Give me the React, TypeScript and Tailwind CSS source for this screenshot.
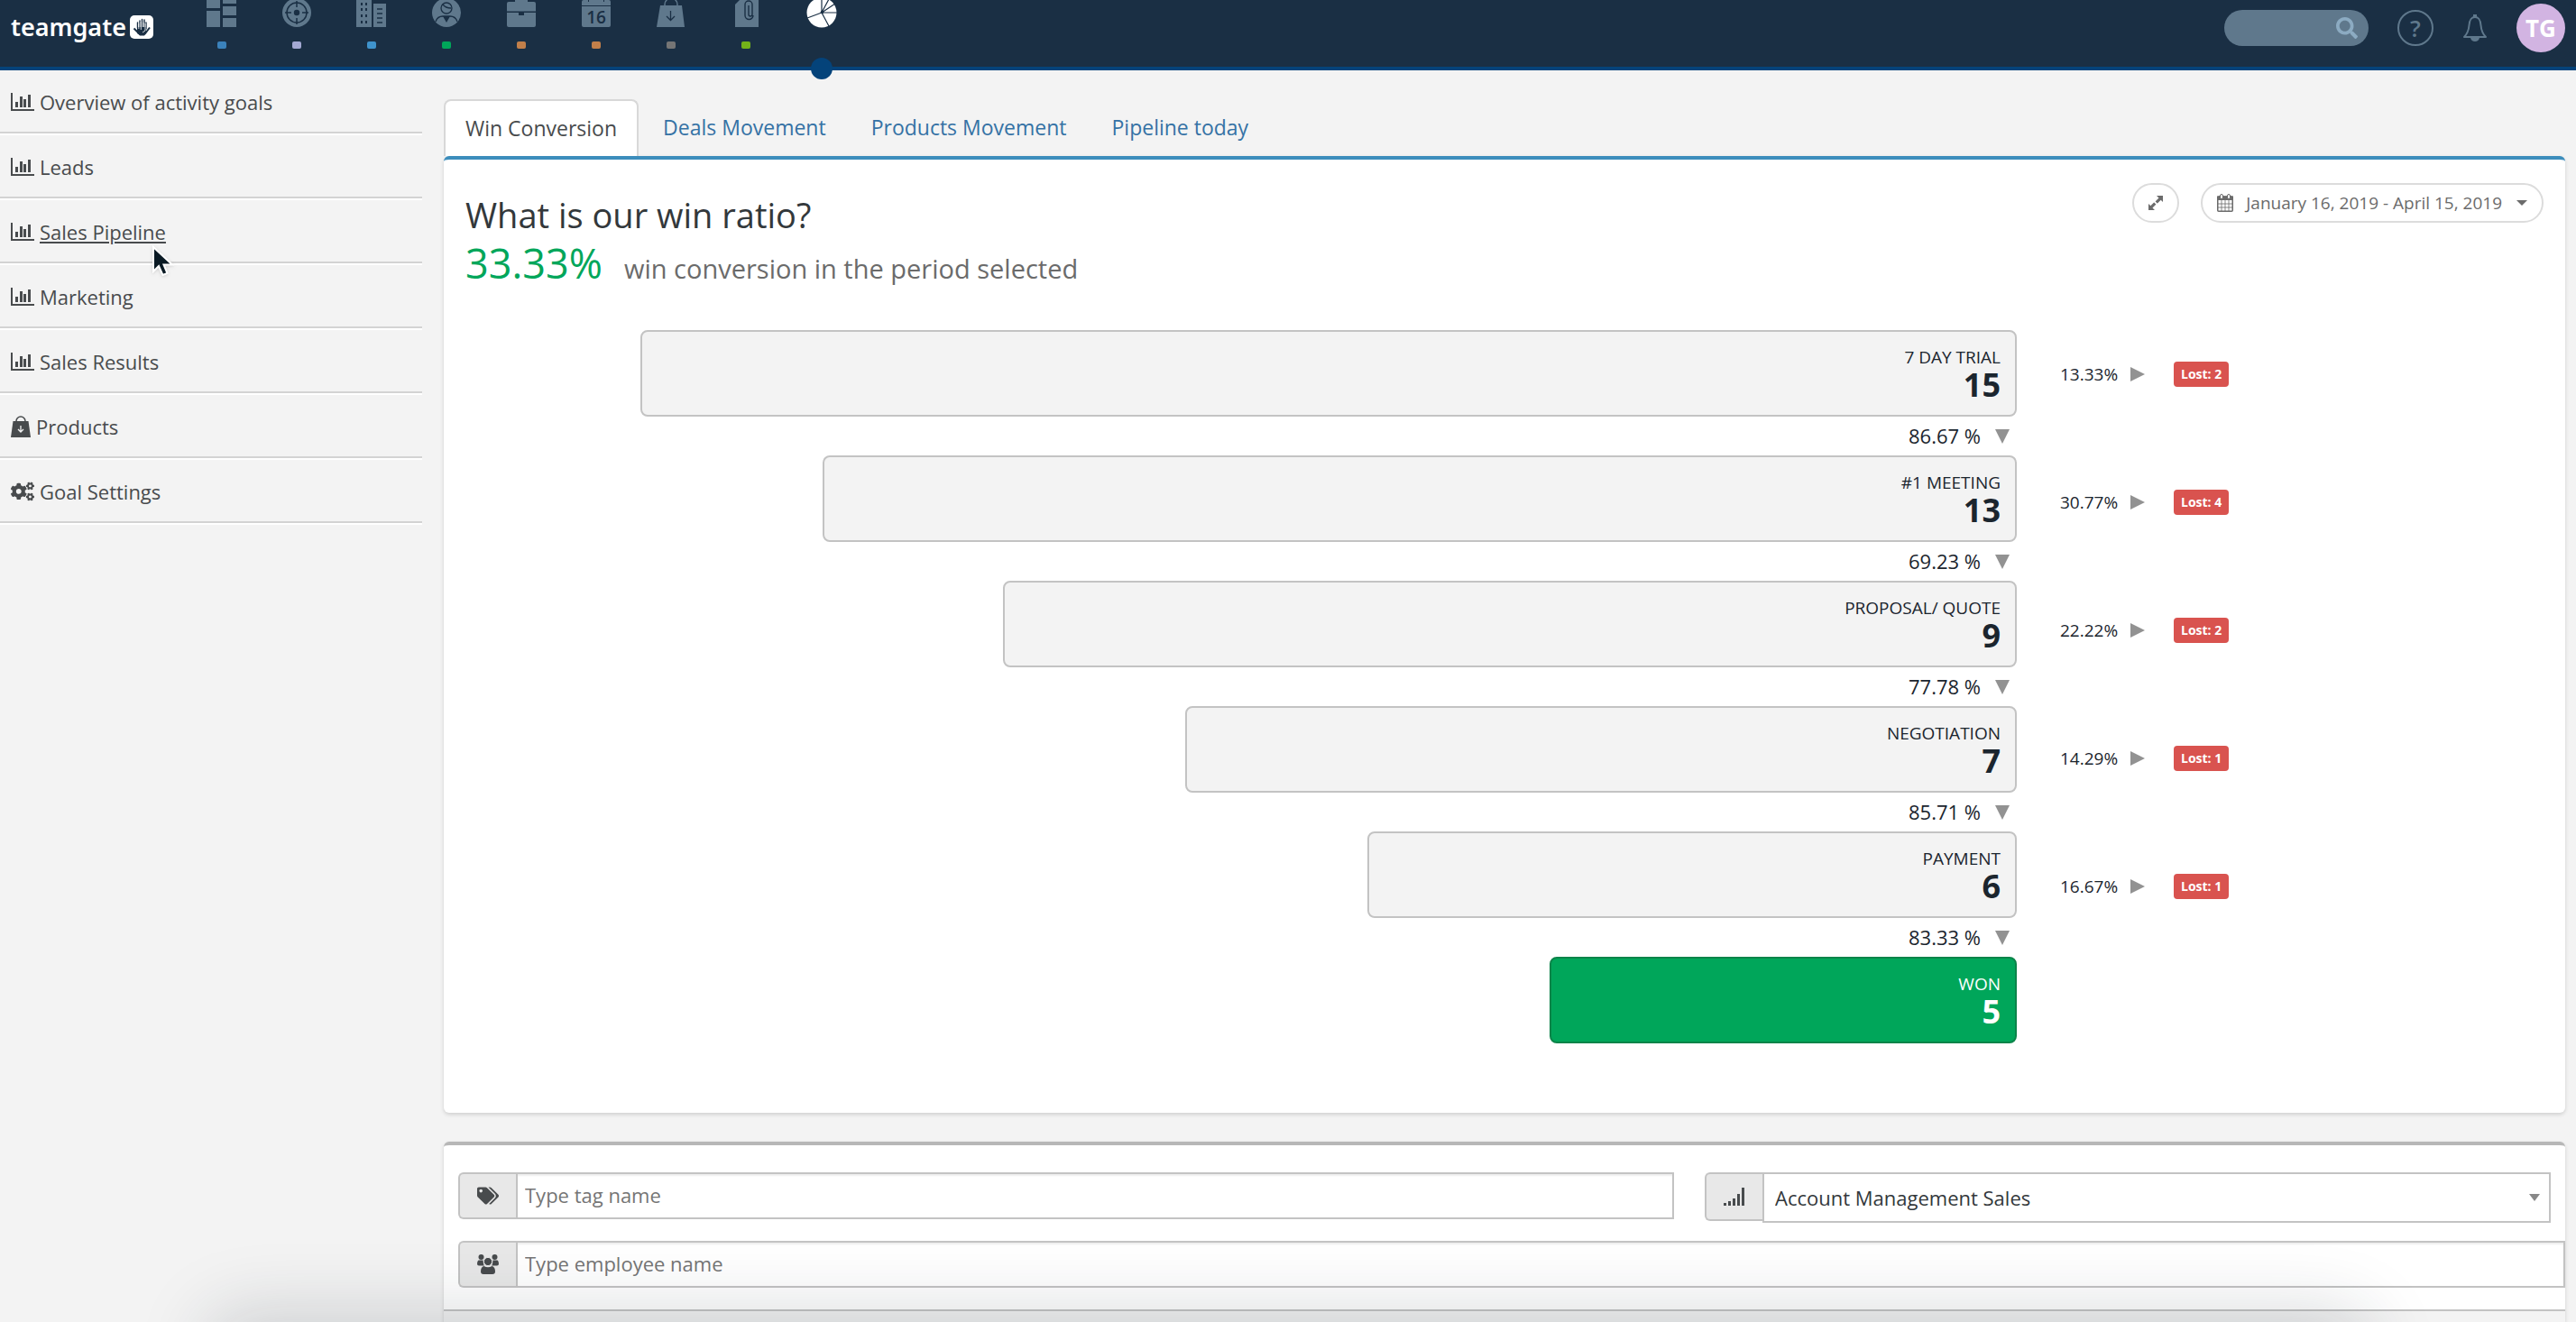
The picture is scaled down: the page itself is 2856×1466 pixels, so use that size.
import React from "react";
import { FaCogs, FaSearch, FaTags } from "react-icons/fa";

const BarChartIcon = () => (
  <svg className="w-[26px] h-5 shrink-0" viewBox="0 0 26 20" fill="currentColor">
    <path d="M0 0h2v18h24v2H0z" />
    <path d="M5 10h3v6H5zM10 4h3v12h-3zM14 7h3v9h-3zM19 2h3v14h-3z" />
  </svg>
);

const BagIcon = () => (
  <svg className="w-[22px] h-6 shrink-0" viewBox="0 0 22 24" fill="none">
    <path d="M6 8V6a5 5 0 0 1 10 0v2" stroke="currentColor" strokeWidth="1.5" />
    <path d="M2.5 6h17L22 24H0z" fill="currentColor" />
    <path d="M11 11v7M8 15l3 3 3-3" stroke="#f3f3f3" strokeWidth="1.3" />
  </svg>
);

const CalendarIcon = () => (
  <svg className="w-[18px] h-5 shrink-0" viewBox="0 0 18 20" fill="none">
    <rect x="0.75" y="3" width="16.5" height="16.2" rx="1" stroke="currentColor" strokeWidth="1.5" />
    <path d="M0 2.5h18V7H0z" fill="currentColor" />
    <path d="M5 7v12M9 7v12M13 7v12M1 11h16M1 15h16" stroke="currentColor" strokeWidth="0.8" />
    <rect x="3.5" y="0.5" width="3" height="5" rx="1.5" fill="#fff" stroke="currentColor" />
    <rect x="11.5" y="0.5" width="3" height="5" rx="1.5" fill="#fff" stroke="currentColor" />
  </svg>
);

const UsersIcon = () => (
  <svg className="w-6 h-[22px]" viewBox="0 0 24 22" fill="currentColor">
    <circle cx="4.5" cy="3" r="3" />
    <circle cx="19.5" cy="3" r="3" />
    <path d="M1.5 6.5h5C7 8 6.5 11 8 12.5H2Q0 12.5 0 10.5 0 7.5 1.5 6.5zM22.5 6.5h-5C17 8 17.5 11 16 12.5h6q2 0 2-2 0-3-1.5-4z" />
    <circle cx="12" cy="8" r="4.6" stroke="#e8e8e8" />
    <path d="M7.5 13q4.5 2.5 9 0 3.5 1 3.5 6 0 3-3 3H7q-3 0-3-3 0-5 3.5-6z" />
  </svg>
);

const SignalIcon = () => (
  <svg className="w-6 h-5" viewBox="0 0 24 20" fill="currentColor">
    <path d="M0 17h3v3H0zM5 15h3v5H5zM10 12h3v8h-3zM15 7h3v13h-3zM20 0h3v20h-3z" />
  </svg>
);

const HandLogo = () => (
  <svg className="w-[26px] h-[26px]" viewBox="0 0 26 26" fill="none">
    <rect width="26" height="26" rx="5" fill="#fff" />
    <path d="M8.5 14V8M11 14V6M13.5 13V4.500M16 13V5M18 15V8" stroke="#1a2f44" strokeWidth="1.4" strokeLinecap="round" />
    <path d="M8 13h10v7l-3.500 2h-3L8 20z" fill="#1a2f44" />
    <path d="M4.500 14.500l5 5 2 2h4l2-2 4.500-6" stroke="#1a2f44" strokeWidth="2" strokeLinejoin="round" />
    <path d="M9.800 9v6M12.300 7v9M14.800 8v5M17 9v8l-3 2" stroke="#fff" strokeWidth="0.8" />
  </svg>
);

const D = "#1a2f44";

const navItems = [
  {
    label: "Dashboard",
    dot: "bg-[#3b82bb]",
    icon: <path d="M0 0h15v9H0zM0 12h15v18H0zM18 0h15v4H18zM18 7h15v10H18zM18 20h15v10H18z" />,
  },
  {
    label: "Leads",
    dot: "bg-[#a3a9d3]",
    icon: (
      <>
        <circle cx="17" cy="14" r="16" />
        <circle cx="17" cy="14" r="11" fill="none" stroke={D} strokeWidth="1.5" />
        <path d="M17 1v7M17 20v7M4 14h7M23 14h7" stroke={D} strokeWidth="1.5" />
        <circle cx="17" cy="14" r="3.2" fill={D} />
      </>
    ),
  },
  {
    label: "Companies",
    dot: "bg-[#3f93cc]",
    icon: (
      <>
        <path d="M0 0h17v30H0zM19 4h14v26H19z" />
        <path d="M5 3h2v3H5zM10 3h2v3h-2zM5 9h2v3H5zM10 9h2v3h-2zM5 16h2v3H5zM10 16h2v3h-2zM5 23h2v3H5zM10 23h2v3h-2z" fill={D} />
        <path d="M23 10h6M23 15h6M23 20h6M23 25h6" stroke={D} strokeWidth="1.3" />
      </>
    ),
  },
  {
    label: "People",
    dot: "bg-[#00a65a]",
    icon: (
      <>
        <circle cx="17" cy="14" r="16" />
        <circle cx="17" cy="9" r="6" fill="none" stroke={D} strokeWidth="1.3" />
        <path d="M13 5q3 4 9 4M5 24q2-6 8-6h8q6 0 8 6" fill="none" stroke={D} strokeWidth="1.3" />
        <path d="M13 18h8l-4 7z" fill={D} />
      </>
    ),
  },
  {
    label: "Deals",
    dot: "bg-[#c17f4a]",
    icon: (
      <>
        <path d="M11 3V1h12v2" fill="none" stroke="currentColor" strokeWidth="2" />
        <rect x="1" y="2" width="32" height="28" rx="2" />
        <path d="M1 12.5h32v1.500H1zM14 13h6v4h-6z" fill={D} />
      </>
    ),
  },
  {
    label: "Calendar",
    dot: "bg-[#c17f4a]",
    icon: (
      <>
        <rect x="1" y="0" width="32" height="30" rx="2" />
        <path d="M1 6h32v1H1zM8 0h1v2H8zM25 0h1v2h-1z" fill={D} />
        <text x="17" y="26" textAnchor="middle" fontSize="19" fontFamily="Open Sans" fontWeight="600" fill={D}>
          16
        </text>
      </>
    ),
  },
  {
    label: "Products",
    dot: "bg-[#757575]",
    icon: (
      <>
        <path d="M10 8V5a7 7 0 0 1 14 0v3" fill="none" stroke="currentColor" strokeWidth="1.5" />
        <path d="M5 6h24l3 24H1z" />
        <path d="M16.5 12v10M12 18l4.500 4.500L21 18" fill="none" stroke={D} strokeWidth="1.3" />
      </>
    ),
  },
  {
    label: "Files",
    dot: "bg-[#73b219]",
    icon: (
      <>
        <path d="M10 0h21v30H5V5z" />
        <path d="M20 6v10a2 2 0 0 0 4 0V5a4 4 0 0 0-8 0v12a4.500 4.500 0 0 0 9 0" fill="none" stroke={D} strokeWidth="1.4" />
      </>
    ),
  },
];

const sideLinks = [
  { label: "Overview of activity goals", icon: <BarChartIcon /> },
  { label: "Leads", icon: <BarChartIcon /> },
  { label: "Sales Pipeline", icon: <BarChartIcon />, hovered: true },
  { label: "Marketing", icon: <BarChartIcon /> },
  { label: "Sales Results", icon: <BarChartIcon /> },
  { label: "Products", icon: <BagIcon /> },
  { label: "Goal Settings", icon: <FaCogs className="w-[26px] h-6 shrink-0" /> },
];

const tabs = ["Win Conversion", "Deals Movement", "Products Movement", "Pipeline today"];

const stages = [
  { name: "7 DAY TRIAL", count: 15, next: "86.67 %", width: 1526 },
  { name: "#1 MEETING", count: 13, next: "69.23 %", width: 1324 },
  { name: "PROPOSAL/ QUOTE", count: 9, next: "77.78 %", width: 1124 },
  { name: "NEGOTIATION", count: 7, next: "85.71 %", width: 922 },
  { name: "PAYMENT", count: 6, next: "83.33 %", width: 720 },
  { name: "WON", count: 5, next: null, width: 518 },
];

const losses = [
  { pct: "13.33%", lost: 2 },
  { pct: "30.77%", lost: 4 },
  { pct: "22.22%", lost: 2 },
  { pct: "14.29%", lost: 1 },
  { pct: "16.67%", lost: 1 },
];

function Header() {
  return (
    <header className="flex h-[78px] items-start border-b-4 border-[#04437a] bg-[#1a2f44]">
      <a href="#" className="flex w-[204px] items-center gap-1 pl-3 pt-[10px] text-white">
        <span className="font-['Noto_Sans',sans-serif] text-[27px] leading-10 font-semibold">teamgate</span>
        <HandLogo />
      </a>

      <nav className="flex">
        {navItems.map((item) => (
          <a key={item.label} href="#" aria-label={item.label} className="flex w-[83px] flex-col items-center text-[#5f788c]">
            <svg className="w-[34px] h-[30px] overflow-visible" viewBox="0 0 34 30" fill="currentColor">
              {item.icon}
            </svg>
            <span className={`mt-4 h-2 w-[10px] rounded-xs ${item.dot}`} />
          </a>
        ))}
        {/* Active section, marked by the dot sitting on the border */}
        <a href="#" aria-label="Insights" className="relative flex h-[74px] w-[86px] flex-col items-center text-white">
          <svg className="w-[34px] h-[30px] overflow-visible" viewBox="0 0 34 30" fill="currentColor">
            <circle cx="17" cy="14" r="16.5" />
            <path d="M17 14V-3M17 14L25-1M17 14L32 4M17 14h17M17 14L25 29M17 14L1 20" stroke={D} strokeWidth="1.2" />
            <circle cx="17.5" cy="13.5" r="1.8" fill={D} />
          </svg>
          <span className="absolute -bottom-[14px] h-6 w-6 rounded-full bg-[#04437a]" />
        </a>
      </nav>

      <div className="ml-auto flex items-center pr-3 pt-1">
        <label className="flex h-10 w-[160px] items-center rounded-full bg-[#5f788c] pr-3">
          <input aria-label="Search" className="min-w-0 flex-1 bg-transparent pl-4 text-xl text-white outline-none" />
          <FaSearch className="h-6 w-6 text-[#8cabc2]" />
        </label>
        <button aria-label="Help" className="ml-8 flex h-10 w-10 items-center justify-center rounded-full border-2 border-[#5f788c] text-[26px] leading-none font-semibold text-[#5f788c]">
          ?
        </button>
        <button aria-label="Notifications" className="ml-8 text-[#5f788c]">
          <svg className="w-[28px] h-[30px]" viewBox="0 0 28 30" fill="none">
            <path
              d="M14 3C9 3 8 7 7.500 12 7 18 6 21 2 25h24c-4-4-5-7-5.500-13C20 7 19 3 14 3z"
              stroke="currentColor"
              strokeWidth="2"
              strokeLinejoin="round"
            />
            <path d="M12 0h4v4h-4zM9 26h10q-1 4-5 4t-5-4z" fill="currentColor" />
          </svg>
        </button>
        <button className="ml-8 h-[54px] w-[54px] rounded-full bg-[#d2b4e2] text-[26px] font-bold text-white">TG</button>
      </div>
    </header>
  );
}

function Sidebar() {
  return (
    <aside className="-mt-0.5 w-[468px] shrink-0">
      {sideLinks.map((link) => (
        <div key={link.label} className="flex h-[72px] items-center border-b-2 border-[#d3d3d3] pl-3 pt-1 shadow-[0_2px_0_#fff]">
          <a
            href="#"
            className={`relative flex items-center gap-[6px] text-[22px] leading-[30px] text-[#484b4d] ${
              link.hovered ? "underline decoration-2 underline-offset-2" : ""
            }`}
          >
            {link.icon}
            {link.label}
            {link.hovered && (
              <svg className="absolute left-[156px] top-[30px] z-10 w-[26px] h-9 drop-shadow" viewBox="0 0 26 36">
                <path d="M2 2v27l6-6 4.500 10 5-2-4-9.500H23z" fill="#0a1a24" stroke="#fff" strokeWidth="2" />
              </svg>
            )}
          </a>
        </div>
      ))}
    </aside>
  );
}

function Funnel() {
  return (
    <div className="grid grid-cols-[218fr_1526fr_608fr]">
      <div className="col-start-2 flex flex-col items-end">
        {stages.map((stage) => (
          <React.Fragment key={stage.name}>
            <div
              style={{ width: `${(stage.width / stages[0].width) * 100}%` }}
              className={`flex h-24 flex-col items-end justify-center rounded-lg border-2 px-4 ${
                stage.next ? "border-[#c3c3c3] bg-[#f3f3f3] text-[#1b252e]" : "border-[#0b8449] bg-[#00a65a] text-white"
              }`}
            >
              <span className="text-[19px] leading-[26px]">{stage.name}</span>
              <span className="text-[36px] leading-[36px] font-bold">{stage.count}</span>
            </div>
            {stage.next && (
              <div className="flex h-[43px] items-center gap-4 pr-2 text-[22px] text-[#1b252e]">
                {stage.next}
                <svg className="w-4 h-4" viewBox="0 0 16 16" fill="#929292">
                  <path d="M0 0h16L8 16z" />
                </svg>
              </div>
            )}
          </React.Fragment>
        ))}
      </div>

      <div className="pl-12 -mt-[22px]">
        {losses.map((row) => (
          <div key={row.pct} className="flex h-[142px] items-center text-[19px] text-[#1b252e]">
            <span className="w-[78px]">{row.pct}</span>
            <svg className="w-4 h-4" viewBox="0 0 16 16" fill="#929292">
              <path d="M0 0l16 8-16 8z" />
            </svg>
            <span className="ml-8 rounded bg-[#d9534f] px-2 text-[14px] leading-7 font-bold text-white">Lost: {row.lost}</span>
          </div>
        ))}
      </div>
    </div>
  );
}

function ConversionPanel() {
  return (
    <section>
      <div className="flex h-[63px] text-[23px]">
        {tabs.map((tab, i) => (
          <button
            key={tab}
            className={
              i === 0
                ? "mr-1 rounded-t-lg border-2 border-b-0 border-[#d8d8d8] bg-white px-[22px] text-[#484b4d]"
                : "mr-1 px-[23px] text-[#3572a5]"
            }
          >
            {tab}
          </button>
        ))}
      </div>
      <div className="min-h-[1061px] rounded-md border-t-4 border-[#3c8dbc] bg-white shadow-[0_2px_4px_rgba(0,0,0,0.15)]">
        <div className="flex items-start justify-between px-6 pt-[26px]">
          <div className="pt-2">
            <h1 className="text-[38px] leading-[54px] text-[#33383b]">What is our win ratio?</h1>
            <p className="leading-[54px]">
              <span className="mr-6 text-[45px] text-[#00a65a]">33.33%</span>
              <span className="text-[29px] text-[#6b6b6b]">win conversion in the period selected</span>
            </p>
          </div>
          <div className="flex items-center gap-6">
            <button aria-label="Expand" className="flex h-11 w-[52px] items-center justify-center rounded-full border-2 border-[#dcdcdc] text-[#6b6b6b]">
              <svg className="w-[18px] h-[18px]" viewBox="0 0 18 18" fill="currentColor">
                <path d="M10 1h7v7l-2.300-2.300-4 4-2.200-2.200 4-4zM8 17H1v-7l2.300 2.300 4-4 2.200 2.200-4 4z" />
                <path d="M6.500 6.500l5 5" stroke="#fff" strokeWidth="1.2" />
              </svg>
            </button>
            <button className="flex h-11 items-center rounded-full border-2 border-[#dcdcdc] px-4 text-[19px] text-[#6b6b6b]">
              <CalendarIcon />
              <span className="ml-[14px] mr-4">January 16, 2019 - April 15, 2019</span>
              <svg className="w-3 h-[6px]" viewBox="0 0 12 6" fill="currentColor">
                <path d="M0 0h12L6 6z" />
              </svg>
            </button>
          </div>
        </div>
        <div className="pt-9">
          <Funnel />
        </div>
      </div>
    </section>
  );
}

function FilterPanel() {
  return (
    <section className="mt-8 flex flex-1 flex-col rounded-t-md border-t-4 border-[#b7b7b7] bg-white shadow-[0_2px_4px_rgba(0,0,0,0.15)]">
      <form className="border-b-2 border-[#c3c3c3] pb-6 pl-4 pt-[30px] text-[22px]">
        <div className="flex items-start pr-4">
          <div className="flex h-[52px] w-[1348px] min-w-0 shrink text-[#484b4d]">
            <label htmlFor="tag" aria-label="Tag" className="flex w-16 items-center justify-center rounded-l-md border-2 border-r-0 border-[#c3c3c3] bg-[#e8e8e8]">
              <FaTags className="h-6 w-6" />
            </label>
            <input
              id="tag"
              placeholder="Type tag name"
              className="min-w-0 flex-1 border-2 border-[#c3c3c3] px-2 pb-[2px] shadow-[inset_0_2px_2px_rgba(0,0,0,0.07)] outline-none placeholder:text-[#757575]"
            />
          </div>
          <div className="ml-[34px] flex flex-1 items-start text-[#484b4d]">
            <label htmlFor="pipeline" aria-label="Pipeline" className="flex h-[54px] w-16 items-center justify-center rounded-l-md border-2 border-r-0 border-[#c3c3c3] bg-[#e8e8e8]">
              <SignalIcon />
            </label>
            <div className="relative flex-1">
              <select id="pipeline" className="h-14 w-full appearance-none border-2 border-[#c3c3c3] bg-white px-3 text-[#33383b] outline-none">
                <option>Account Management Sales</option>
              </select>
              <svg className="pointer-events-none absolute right-3 top-6 w-3 h-2" viewBox="0 0 12 8" fill="#888">
                <path d="M0 0h12L6 8z" />
              </svg>
            </div>
          </div>
        </div>
        <div className="mt-5 flex h-[52px] text-[#484b4d]">
          <label htmlFor="employee" aria-label="Employee" className="flex w-16 items-center justify-center rounded-l-md border-2 border-r-0 border-[#c3c3c3] bg-[#e8e8e8]">
            <UsersIcon />
          </label>
          <input
            id="employee"
            placeholder="Type employee name"
            className="min-w-0 flex-1 border-2 border-[#c3c3c3] px-2 pb-[2px] shadow-[inset_0_2px_2px_rgba(0,0,0,0.07)] outline-none placeholder:text-[#757575]"
          />
        </div>
      </form>
      <div className="flex-1 bg-[#f3f3f3]" />
    </section>
  );
}

export default function App() {
  return (
    <div className="relative flex min-h-screen flex-col overflow-hidden bg-[#f3f3f3] font-['Open_Sans',sans-serif]">
      <Header />
      <div className="flex flex-1">
        <Sidebar />
        <main className="flex min-w-0 flex-1 flex-col pl-6 pr-3 pt-8">
          <ConversionPanel />
          <FilterPanel />
        </main>
      </div>
      {/* Soft shade rising from the bottom edge */}
      <div className="pointer-events-none absolute inset-x-[240px] top-full h-20 rounded-3xl shadow-[0_0_80px_10px_rgba(30,40,50,0.18)]" />
    </div>
  );
}
